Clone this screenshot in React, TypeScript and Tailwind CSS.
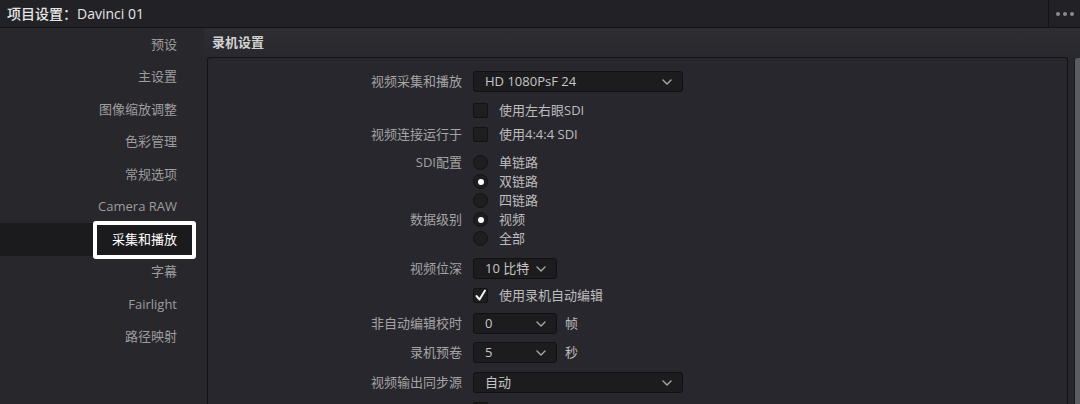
const font = { fontFamily: '"Open Sans", "Noto Sans CJK SC", sans-serif' };

const sideItems = [
  "预设",
  "主设置",
  "图像缩放调整",
  "色彩管理",
  "常规选项",
  "Camera RAW",
  "采集和播放",
  "字幕",
  "Fairlight",
  "路径映射",
];

function Chevron() {
  return (
    <svg width="10" height="6" viewBox="0 0 10 6">
      <path d="M1 1l4 4 4-4" stroke="#a8a8a8" strokeWidth="1.4" fill="none" strokeLinecap="round" strokeLinejoin="round" />
    </svg>
  );
}

function Select({ value, wide }: { value: string; wide?: boolean }) {
  return (
    <div
      className={`${wide ? "w-[210px]" : "w-[84px]"} h-[21px] rounded-[3px] bg-[#1c1c1e] border border-[#111113] flex items-center justify-between pl-[11px] pr-[10px] text-[13px] text-[#c6c6c6]`}
    >
      <span>{value}</span>
      <Chevron />
    </div>
  );
}

function Checkbox({ checked }: { checked?: boolean }) {
  return (
    <div className="w-[15px] h-[15px] rounded-[2px] bg-[#1e1e20] border border-[#131314] flex items-center justify-center">
      {checked && (
        <svg width="13" height="13" viewBox="0 0 13 13">
          <path d="M2.5 7l3 3.5L11 1.5" stroke="#f2f2f2" strokeWidth="2" fill="none" strokeLinecap="round" strokeLinejoin="round" />
        </svg>
      )}
    </div>
  );
}

function Radio({ on }: { on?: boolean }) {
  return (
    <div className="w-[15px] h-[15px] rounded-full bg-[#1e1e20] border border-[#131314] flex items-center justify-center">
      {on && <div className="w-[6px] h-[6px] rounded-full bg-white" />}
    </div>
  );
}

function Row({ label, h = "h-[19px]", mt, children }: { label?: string; h?: string; mt?: string; children: React.ReactNode }) {
  return (
    <div className={`flex items-center ${h} ${mt ?? ""}`}>
      <div className="w-[254px] text-right text-[13px] text-[#a4a4a4]">{label}</div>
      <div className="ml-[11px] flex items-center text-[13px] text-[#bdbdbd]">{children}</div>
    </div>
  );
}

function Option({ children }: { children: React.ReactNode }) {
  return <span className="ml-[11px]">{children}</span>;
}

export default function App() {
  return (
    <div className="w-[1080px] h-[404px] overflow-hidden bg-[#28272c] flex flex-col" style={font}>
      {/* Title bar */}
      <div className="h-[28px] shrink-0 flex bg-[#222125] border-b border-[#141416]">
        <div className="flex-1 flex items-center pl-[7px] text-[14px] font-medium text-[#e6e6e6]">
          项目设置：Davinci 01
        </div>
        <div className="w-[32px] border-l border-[#141416] flex items-center justify-center gap-[3px]">
          <span className="w-[4px] h-[4px] rounded-full bg-[#8c8c90]" />
          <span className="w-[4px] h-[4px] rounded-full bg-[#8c8c90]" />
          <span className="w-[4px] h-[4px] rounded-full bg-[#8c8c90]" />
        </div>
      </div>

      <div className="flex flex-1 min-h-0">
        {/* Sidebar */}
        <div className="w-[204px] shrink-0 bg-[#28272c]">
          {sideItems.map((item) => {
            const active = item === "采集和播放";
            return (
              <div
                key={item}
                className={`relative h-[32.5px] flex items-center justify-end text-[13px] ${
                  active ? "bg-[#1b1b1d] mr-[8px] pr-[19px] text-white" : "pr-[27px] text-[#9d9d9d]"
                }`}
              >
                {active && (
                  <div className="absolute left-[93px] right-0 top-[-2px] bottom-[-3px] border-[4px] border-white rounded-[3px] bg-[#1b1b1d]" />
                )}
                <span className="relative">{item}</span>
              </div>
            );
          })}
        </div>

        {/* Content */}
        <div className="flex-1 flex flex-col min-w-0">
          <div className="h-[29px] shrink-0 flex items-center pl-[8px] text-[13px] font-semibold text-[#d2d2d2] bg-gradient-to-b from-[#2e2d32] to-[#29282d]">
            录机设置
          </div>
          <div className="flex flex-1 min-h-0 pl-[3px]">
            <div className="flex-1 rounded-t-[3px] border border-b-0 border-[#131315] bg-[#28272d] pt-[13px] overflow-hidden">
              <Row label="视频采集和播放" h="h-[21px]">
                <Select value="HD 1080PsF 24" wide />
              </Row>
              <Row mt="mt-[9px]">
                <Checkbox />
                <Option>使用左右眼SDI</Option>
              </Row>
              <Row label="视频连接运行于" mt="mt-[5px]">
                <Checkbox />
                <Option>使用4:4:4 SDI</Option>
              </Row>
              <Row label="SDI配置" mt="mt-[9px]">
                <Radio />
                <Option>单链路</Option>
              </Row>
              <Row>
                <Radio on />
                <Option>双链路</Option>
              </Row>
              <Row>
                <Radio />
                <Option>四链路</Option>
              </Row>
              <Row label="数据级别">
                <Radio on />
                <Option>视频</Option>
              </Row>
              <Row>
                <Radio />
                <Option>全部</Option>
              </Row>
              <Row label="视频位深" h="h-[21px]" mt="mt-[10px]">
                <Select value="10 比特" />
              </Row>
              <Row mt="mt-[7px]">
                <Checkbox checked />
                <Option>使用录机自动编辑</Option>
              </Row>
              <Row label="非自动编辑校时" h="h-[21px]" mt="mt-[8px]">
                <Select value="0" />
                <span className="ml-[8px]">帧</span>
              </Row>
              <Row label="录机预卷" h="h-[21px]" mt="mt-[8px]">
                <Select value="5" />
                <span className="ml-[8px]">秒</span>
              </Row>
              <Row label="视频输出同步源" h="h-[21px]" mt="mt-[9px]">
                <Select value="自动" wide />
              </Row>
              <Row mt="mt-[7px]">
                <Checkbox />
              </Row>
            </div>
            {/* Scrollbar */}
            <div className="w-[12px] shrink-0 flex justify-end pt-[1px]">
              <div className="w-[6px] rounded-tl-[3px] bg-[#5b5c61] border-l border-[#1a1a1c]" />
            </div>
          </div>
        </div>
      </div>
    </div>
  );
}
